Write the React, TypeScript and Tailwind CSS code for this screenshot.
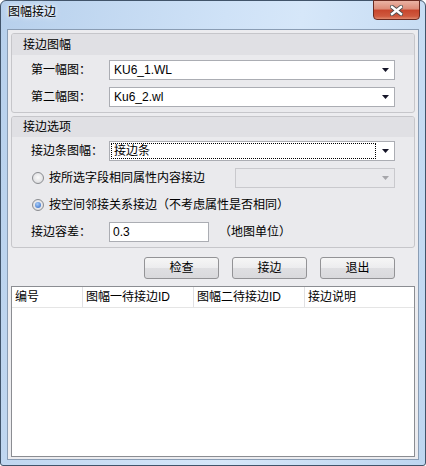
import React from 'react';

const Arrow = ({ disabled }: { disabled?: boolean }) => (
  <svg width="7" height="4" viewBox="0 0 7 4">
    <path d="M0 0h7L3.5 4z" fill={disabled ? '#a6a6aa' : '#151528'} />
  </svg>
);

interface ComboProps {
  value?: string;
  className?: string;
  focused?: boolean;
  disabled?: boolean;
}

const Combo: React.FC<ComboProps> = ({ value, className, focused, disabled }) => (
  <div
    className={`flex h-[20px] border ${
      disabled ? 'border-[#c9c9cd] bg-[#e9e9ec]' : 'border-[#abadb3] bg-white'
    } ${className ?? ''}`}
  >
    <div className="flex flex-1 p-px">
      {focused ? (
        <div className="flex flex-1 items-center border border-dotted border-black pl-[2px] leading-[16px]">
          {value}
        </div>
      ) : (
        <div className="flex flex-1 items-center pl-[3px] leading-[18px]">{value}</div>
      )}
    </div>
    <div className="flex w-[17px] items-center justify-center">
      <Arrow disabled={disabled} />
    </div>
  </div>
);

const Radio = ({ checked }: { checked?: boolean }) => (
  <span className="flex h-[12px] w-[12px] items-center justify-center rounded-full border border-[#8a8c90] bg-[radial-gradient(circle_at_50%_45%,#fbfbfb_0%,#e4e4e6_60%,#cfd0d3_100%)]">
    {checked && (
      <span className="h-[6px] w-[6px] rounded-full bg-[radial-gradient(circle_at_40%_35%,#a9cdf7,#2a63c4)]" />
    )}
  </span>
);

const Button = ({ label }: { label: string }) => (
  <button className="h-[22px] w-[75px] rounded-[3px] border border-[#939396] bg-[linear-gradient(180deg,#f6f6f6_0%,#ececee_50%,#dfdfe2_51%,#d9d9dc_100%)] leading-[20px] text-black">
    {label}
  </button>
);

const Group = ({ title, headerH, children }: { title: string; headerH: string; children: React.ReactNode }) => (
  <div className="mx-[3px] flex flex-col rounded-[3px] border border-[#c6c6ca] bg-[#eaeaed]">
    <div className={`${headerH} flex items-center rounded-t-[2px] bg-[#e0e0e4] pl-[11px]`}>{title}</div>
    {children}
  </div>
);

export default function App() {
  return (
    <div className="h-[466px] w-[426px] font-['Liberation_Sans','Noto_Sans_CJK_SC',sans-serif] text-[12px] text-black">
      <div className="flex h-full flex-col rounded-t-[6px] rounded-b-[3px] border border-[#41546a] bg-[linear-gradient(100deg,#b7d0ec_0%,#cfe2f7_45%,#d6e7f9_60%,#bed6f0_100%)]">
        {/* title bar */}
        <div className="flex h-[28px] items-start justify-between">
          <span className="pl-[7px] pt-[3px] leading-[16px] [text-shadow:0_0_6px_#ffffff,0_0_3px_#ffffff]">
            图幅接边
          </span>
          <div className="-mt-px mr-[5px] flex h-[20px] w-[47px] items-center justify-center rounded-b-[4px] border border-[#6a2a20] bg-[linear-gradient(180deg,#eab3a4_0%,#dc8b77_45%,#c7452c_50%,#cf5a3f_85%,#e08a6f_100%)]">
            <svg width="13" height="11" viewBox="0 0 13 11">
              <path d="M2 2l9 7M11 2l-9 7" stroke="#4b4b4b" strokeWidth="4.2" strokeLinecap="square" />
              <path d="M2 2l9 7M11 2l-9 7" stroke="#ffffff" strokeWidth="2.4" strokeLinecap="square" />
            </svg>
          </div>
        </div>

        {/* client area */}
        <div className="flex flex-1 flex-col px-[6px] pb-[5px]">
          <div className="flex flex-1 flex-col border border-[#8a9db4] bg-[#ececef] pt-[3px] pb-[2px]">
            <Group title="接边图幅" headerH="h-[21px]">
              <div className="flex flex-col gap-[7px] pt-[5px] pb-[5px] pl-[19px] pr-[19px]">
                <div className="flex h-[20px] items-center">
                  <span className="w-[78px]">第一幅图：</span>
                  <Combo value="KU6_1.WL" className="w-[286px]" />
                </div>
                <div className="flex h-[20px] items-center">
                  <span className="w-[78px]">第二幅图：</span>
                  <Combo value="Ku6_2.wl" className="w-[286px]" />
                </div>
              </div>
            </Group>

            <div className="h-[3px]" />

            <Group title="接边选项" headerH="h-[20px]">
              <div className="flex flex-col gap-[7px] pt-[4px] pb-[5px] pl-[19px] pr-[19px]">
                <div className="flex h-[20px] items-center">
                  <span className="w-[78px]">接边条图幅：</span>
                  <Combo value="接边条" focused className="w-[286px]" />
                </div>
                <div className="flex h-[20px] items-center">
                  <span className="ml-px">
                    <Radio />
                  </span>
                  <span className="ml-[5px]">按所选字段相同属性内容接边</span>
                  <Combo disabled className="ml-auto w-[160px]" />
                </div>
                <div className="flex h-[20px] items-center">
                  <span className="ml-px">
                    <Radio checked />
                  </span>
                  <span className="ml-[5px]">按空间邻接关系接边（不考虑属性是否相同）</span>
                </div>
                <div className="flex h-[20px] items-center">
                  <span className="w-[78px]">接边容差：</span>
                  <div className="flex h-[20px] w-[100px] items-center border border-[#abadb3] bg-white pl-[3px]">0.3</div>
                  <span className="ml-[10px]">（地图单位）</span>
                </div>
              </div>
            </Group>

            <div className="mt-[9px] flex justify-end gap-[13px] pr-[23px]">
              <Button label="检查" />
              <Button label="接边" />
              <Button label="退出" />
            </div>

            <div className="mx-[3px] mt-[7px] flex flex-1 flex-col border border-[#8b8d92] bg-white">
              <div className="flex h-[21px] border-b border-[#e5e5e5]">
                <div className="w-[71px] border-r border-[#e0e0e3] pl-[3px] leading-[20px]">编号</div>
                <div className="w-[111px] border-r border-[#e0e0e3] pl-[3px] leading-[20px]">图幅一待接边ID</div>
                <div className="w-[111px] border-r border-[#e0e0e3] pl-[3px] leading-[20px]">图幅二待接边ID</div>
                <div className="flex-1 pl-[3px] leading-[20px]">接边说明</div>
              </div>
            </div>
          </div>
        </div>
      </div>
    </div>
  );
}
